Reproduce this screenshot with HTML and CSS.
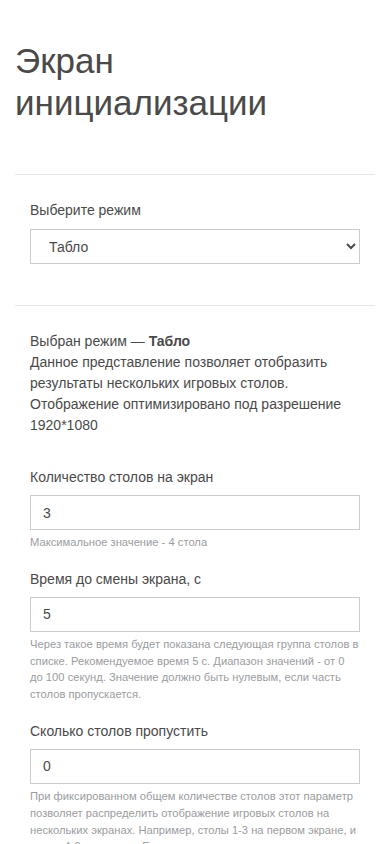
FILE: index.html
```html
<!DOCTYPE html>
<html lang="ru">
<head>
<meta charset="utf-8">
<meta name="viewport" content="width=device-width, initial-scale=1">
<title>Экран инициализации</title>
<link rel="stylesheet" href="styles.css">
</head>
<body>
<div class="page">
  <h1 class="title">Экран инициализации</h1>
  <hr class="divider">
  <section class="section section-mode">
    <label class="label" for="mode">Выберите режим</label>
    <select class="select" id="mode">
      <option>Табло</option>
    </select>
  </section>
  <hr class="divider">
  <section class="section">
    <p class="desc">Выбран режим — <b>Табло</b><br>Данное представление позволяет отобразить результаты нескольких игровых столов. Отображение оптимизировано под разрешение 1920*1080</p>
    <div class="field field-first">
      <label class="label" for="count">Количество столов на экран</label>
      <input class="input" id="count" type="text" value="3">
      <p class="help">Максимальное значение - 4 стола</p>
    </div>
    <div class="field">
      <label class="label" for="time">Время до смены экрана, с</label>
      <input class="input" id="time" type="text" value="5">
      <p class="help">Через такое время будет показана следующая группа столов в списке. Рекомендуемое время 5 с. Диапазон значений - от 0 до 100 секунд. Значение должно быть нулевым, если часть столов пропускается.</p>
    </div>
    <div class="field">
      <label class="label" for="skip">Сколько столов пропустить</label>
      <input class="input" id="skip" type="text" value="0">
      <p class="help">При фиксированном общем количестве столов этот параметр позволяет распределить отображение игровых столов на нескольких экранах. Например, столы 1-3 на первом экране, и столы 4-6 на втором. Если задано данное значение, то экран будет показывать столы, начиная со следующего после пропущенных.</p>
    </div>
  </section>
</div>
</body>
</html>
```
FILE: styles.css
```css
html, body {
  margin: 0;
  padding: 0;
  background: #fff;
}
body {
  font-family: "Liberation Sans", Arial, sans-serif;
  font-size: 14px;
  line-height: 1.5;
  color: #4a4a4a;
}
.page {
  padding: 40px 15px 0;
  display: flex;
  flex-direction: column;
}
.title {
  margin: 0;
  font-size: 35px;
  font-weight: 400;
  line-height: 42px;
  color: #4a4a4a;
}
.divider {
  margin: 50px 0 0;
  border: 0;
  border-top: 1px solid #e6e6e6;
  height: 0;
}
.section {
  padding: 25px 15px 0;
  display: flex;
  flex-direction: column;
}
.section-mode {
  padding-bottom: 41px;
}
.section-mode + .divider {
  margin-top: 0;
}
.label {
  display: block;
  margin-bottom: 8px;
}
.select {
  display: block;
  width: 100%;
  height: 35px;
  margin: 0;
  padding: 0 8px 0 14px;
  border: 1px solid #cccccc;
  border-radius: 0;
  background: #fff;
  font-family: inherit;
  font-size: 14px;
  color: #4a4a4a;
  box-sizing: border-box;
}
.desc {
  margin: 0;
}
.field {
  display: flex;
  flex-direction: column;
  margin-top: 18px;
}
.field-first {
  margin-top: 31px;
}
.field .label {
  margin-bottom: 7px;
}
.input {
  display: block;
  width: 100%;
  height: 35px;
  margin: 0;
  padding: 0 12px;
  border: 1px solid #cccccc;
  border-radius: 0;
  box-sizing: border-box;
  font-family: inherit;
  font-size: 14px;
  color: #4a4a4a;
  background: #fff;
  outline: none;
}
.help {
  margin: 4px 0 0;
  font-size: 11.2px;
  line-height: 1.5;
  color: #9a9ca0;
}
```
